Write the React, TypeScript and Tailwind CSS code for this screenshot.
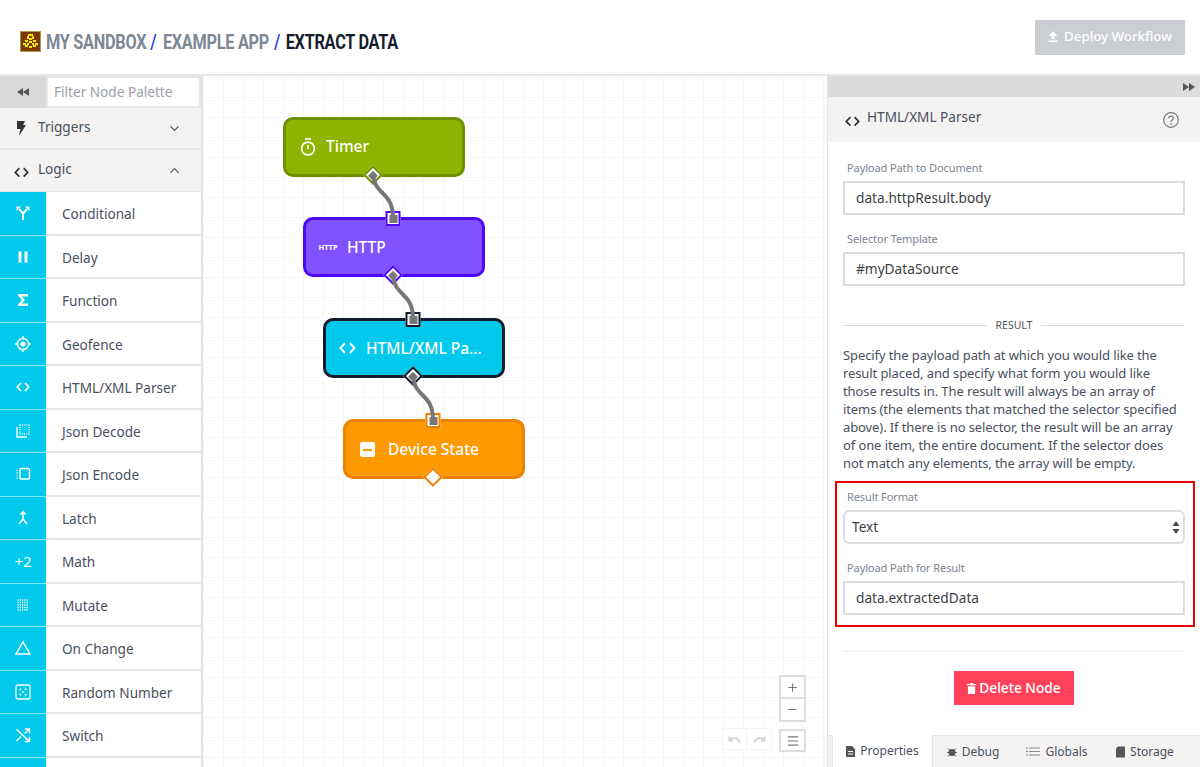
import React from "react";
import { ChevronDown, ChevronUp, Plus, Minus, Menu } from "lucide-react";

const Code = ({ c = "text-white", s = 14 }: { c?: string; s?: number }) => (
  <svg width={s} height={s * 0.72} viewBox="0 0 14 10" fill="none" stroke="currentColor" strokeWidth="1.6" className={c}>
    <path d="M5 1 1.2 5 5 9M9 1l3.8 4L9 9" />
  </svg>
);

const Ic = ({ children }: { children: React.ReactNode }) => (
  <svg width="16" height="16" viewBox="0 0 16 16" fill="none" stroke="white" strokeWidth="1.4">
    {children}
  </svg>
);

const items: [string, React.ReactNode][] = [
  ["Conditional", <Ic><path d="M8 15V8.5L4 4M8 8.5 12 4" strokeWidth="1.9" /><path d="M1.5 1.5h4.5L1.5 6zM14.5 1.5H10L14.5 6z" fill="white" stroke="none" /></Ic>],
  ["Delay", <Ic><path d="M3.5 2.5h3v11h-3zM9.5 2.5h3v11h-3z" fill="white" stroke="none" /></Ic>],
  ["Function", <Ic><path d="M3 2h10v2.4H6.8L10 8l-3.2 3.6H13V14H3v-1.6L7 8 3 3.6z" fill="white" stroke="none" /></Ic>],
  ["Geofence", <Ic><circle cx="8" cy="8" r="5.6" strokeWidth="1.5" /><circle cx="8" cy="8" r="2.6" fill="white" stroke="none" /><path d="M8 0v2.5M8 13.5V16M0 8h2.5M13.5 8H16" /></Ic>],
  ["HTML/XML Parser", <Code />],
  ["Json Decode", <Ic><path d="M2 4v10h10" strokeWidth="1.4" /><rect x="5" y="2" width="9" height="9" strokeDasharray="1 1.2" /></Ic>],
  ["Json Encode", <Ic><rect x="5" y="2.5" width="9.5" height="10.5" rx="1" strokeWidth="1.5" /><path d="M2 4v9" strokeDasharray="1 1.6" /></Ic>],
  ["Latch", <Ic><path d="M8 2v7l-4 5M8 9l4 5M5.5 4.5 8 1.5l2.5 3" strokeWidth="1.5" /></Ic>],
  ["Math", <span className="text-[15px] text-white leading-none">+2</span>],
  ["Mutate", <Ic><path d="M2.5 3h11M2.5 5.5h11M2.5 8h11M2.5 10.5h11M2.5 13h11" strokeDasharray="1.2 1.05" strokeWidth="1.3" /></Ic>],
  ["On Change", <Ic><path d="M8 2 15 14H1z" strokeWidth="1.4" /></Ic>],
  ["Random Number", <Ic><rect x="1" y="1" width="14" height="14" rx="2" strokeWidth="1.3" /><path d="M4.5 4.5h1.7v1.7H4.5zM9.8 4.5h1.7v1.7H9.8zM7.15 7.15h1.7v1.7h-1.7zM4.5 9.8h1.7v1.7H4.5zM9.8 9.8h1.7v1.7H9.8z" fill="white" stroke="none" /></Ic>],
  ["Switch", <Ic><path d="M1.5 2.5 14 14M1.5 14 6 9.5M9.5 6.5 14 2.5M10 2h4.5v4.5M10 14.5h4.5V10" strokeWidth="1.5" /></Ic>],
];

const Logo = () => (
  <svg width="21" height="21" viewBox="0 0 21 21" shapeRendering="crispEdges" className="shrink-0">
    <rect width="21" height="21" fill="#7d3a00" />
    <path d="M0 0h21v1H0zM0 20h21v1H0zM0 0h1v21H0zM20 0h1v21h-1z" fill="#a89a50" />
    <path d="M8 3h5v2H8zM7 5h2v3H7zM12 5h2v3h-2zM9 7h3v2H9zM5 9h3v2H5zM13 9h3v2h-3zM9 10h3v2H9zM3 12h3v2H3zM15 12h3v2h-3zM7 12h2v2H7zM12 12h2v2h-2zM5 14h3v2H5zM13 14h3v2h-3zM9 15h3v2H9z" fill="#f5e60a" />
  </svg>
);

const Port = ({ cls }: { cls: string }) => (
  <div className={`absolute left-[calc(50%-1px)] -translate-x-1/2 -top-[9px] w-[15px] h-[15px] border-[2px] bg-white z-10 flex items-center justify-center ${cls}`}>
    <div className="w-[8px] h-[8px] bg-[#777]" />
  </div>
);

const Diamond = ({ cls, inner = "bg-[#777]" }: { cls: string; inner?: string }) => (
  <div className={`absolute left-1/2 -ml-[8px] -bottom-[8px] w-[14px] h-[14px] rotate-45 border-[2px] bg-white z-10 flex items-center justify-center ${cls}`}>
    <div className={`w-[7px] h-[7px] ${inner}`} />
  </div>
);

const Field = ({ label, value, cls = "" }: { label: string; value: string; cls?: string }) => (
  <div className={cls}>
    <div className="text-[11px] tracking-[-0.1px] leading-[14px] text-[#7b8490] pl-1">{label}</div>
    <div className="mt-[6px] h-[34px] border-2 border-[#dcdcdc] bg-white pl-[11px] text-[13.7px] leading-[30px] text-[#3d3f45]">{value}</div>
  </div>
);

const node = "absolute w-[182px] h-[60px] rounded-[10px] border-[3px] text-white flex items-center text-[15.5px] font-medium";

export default function App() {
  return (
    <div className="w-[1200px] h-[767px] overflow-hidden bg-white flex flex-col font-['Noto_Sans',sans-serif]">
      <header className="h-[76px] shrink-0 border-b-2 border-[#e6e6e6] flex items-start justify-between pl-5 pr-[15px]">
        <div className="flex items-center mt-[31px] h-[21px] whitespace-nowrap">
          <Logo />
          <div className="ml-[5px] origin-left scale-x-[0.815] text-[20px] font-bold tracking-[-0.35px] text-[#7e8794] font-['Roboto',sans-serif]">
            <span>MY SANDBOX</span>
            <span className="text-[#1f35f5] ml-[5px] mr-[8px] font-medium">/</span>
            <span>EXAMPLE APP</span>
            <span className="text-[#1f35f5] ml-[6px] mr-[7px] font-medium">/</span>
            <span className="text-[#161d2e]">EXTRACT DATA</span>
          </div>
        </div>
        <div className="mt-[20px] w-[150px] h-[35px] bg-[#cbced2] flex items-center justify-center gap-[6px] text-white text-[13.3px] font-medium pb-[2px]">
          <svg width="10" height="11" viewBox="0 0 10 11" fill="white"><path d="M5 0 9.5 5H6.6v3H3.4V5H.5zM.5 9.5h9V11h-9z" /></svg>
          Deploy Workflow
        </div>
      </header>
      <div className="flex flex-1 min-h-0">
        <aside className="w-[203px] shrink-0 border-r-2 border-[#e3e3e3] flex flex-col overflow-hidden text-[#4a505e]">
          <div className="h-[32px] shrink-0 flex bg-[#d9d9d9]">
            <div className="w-[46px] flex items-center justify-center text-[#555]">
              <svg width="12" height="8" viewBox="0 0 12 8" fill="currentColor"><path d="M6 0v8L0 4zM12 0v8L6 4z" /></svg>
            </div>
            <div className="flex-1 border-[2px] border-[#e6e6e6] bg-white pl-[6px] text-[13.6px] leading-[28px] text-[#9aa0a6]">Filter Node Palette</div>
          </div>
          <div className="h-[42px] shrink-0 flex items-center bg-[#f4f3f2] border-b-2 border-[#e8e8e8] pl-[16px] pr-[19px] text-[13.6px]">
            <svg width="10" height="15" viewBox="0 0 10 15" fill="#333" className="mr-[12px] mt-[1px]"><path d="M1 0h8L7 4h3L3 15l1.5-7H1z" /></svg>
            <span className="flex-1 -mt-[1px]">Triggers</span>
            <ChevronDown size={15} color="#555" />
          </div>
          <div className="h-[42px] shrink-0 flex items-center bg-[#f4f3f2] border-b border-[#e8e8e8] pl-[14px] pr-[19px] text-[13.6px]">
            <Code c="text-[#333] mr-[9px] mt-[3px]" s={15} />
            <span className="flex-1 -mt-[2px]">Logic</span>
            <ChevronUp size={15} color="#555" />
          </div>
          {items.map(([name, icon]) => (
            <div key={name} className="h-[43.5px] shrink-0 flex items-stretch bg-white border-b-2 border-[#e6e6e6]">
              <div className="w-[46px] -mb-[2px] bg-[#00c9ec] border-b border-[#80e4f5] flex items-center justify-center">{icon}</div>
              <div className="pl-[16px] pt-[3px] flex items-center text-[13.6px] text-[#4a505e]">{name}</div>
            </div>
          ))}
          <div className="h-[20px] shrink-0 flex"><div className="w-[46px] bg-[#00c9ec]" /></div>
        </aside>
        <main className="flex-1 relative overflow-hidden bg-white bg-[linear-gradient(#f6f6f6_1px,transparent_1px),linear-gradient(90deg,#f6f6f6_1px,transparent_1px)] bg-[size:20px_20px] bg-[position:0_1px]">
          <div className={`${node} left-[80px] top-[41px] border-[#6f8f00] bg-[#8fb400] pl-[13px]`}>
            <svg width="18" height="18" viewBox="0 0 18 18" fill="none" stroke="white" strokeWidth="1.7"><circle cx="9" cy="10.5" r="6.4" /><path d="M6 1h6M9 7v4" /></svg>
            <span className="ml-[9px]">Timer</span>
            <Diamond cls="border-[#6f8f00]" />
          </div>
          <div className={`${node} left-[100px] top-[141px] border-[#4b09f5] bg-[#8052ff] pl-[11px] pt-[1px]`}>
            <span className="text-[7.5px] font-bold w-[22px] text-center">HTTP</span>
            <span className="ml-[8px]">HTTP</span>
            <Port cls="border-[#4b09f5]" />
            <Diamond cls="border-[#4b09f5]" />
          </div>
          <div className={`${node} left-[120px] top-[242px] border-[#141b2d] bg-[#00c9ec] pl-[13px] pt-[1px]`}>
            <Code s={17} />
            <span className="ml-[10px]">HTML/XML Pa...</span>
            <Port cls="border-[#141b2d]" />
            <Diamond cls="border-[#141b2d]" />
          </div>
          <div className={`${node} left-[140px] top-[343px] border-[#ee8200] bg-[#ff9a00] pl-[14px] pt-[1px]`}>
            <div className="w-[15px] h-[15px] rounded-[2px] bg-white flex items-center justify-center"><div className="w-[9px] h-[2px] bg-[#ff9a00]" /></div>
            <span className="ml-[13px]">Device State</span>
            <Port cls="border-[#ee8200]" />
            <Diamond cls="border-[#ee8200]" inner="bg-white" />
          </div>
          <svg className="absolute inset-0 z-20 pointer-events-none" width="624" height="691" fill="none" stroke="#777" strokeWidth="4">
            <path d="M170 99C172 120 190 115 190 142" />
            <path d="M190 200C192 221 210 216 210 243" />
            <path d="M210 301C212 322 230 317 230 344" />
          </svg>
          <div className="absolute left-[519px] top-[652px] flex text-[#d0d0d0] bg-white">
            <div className="w-[25px] h-[22px] border border-[#f5f5f5] flex items-center justify-center">
              <svg width="13" height="8" viewBox="0 0 13 8" fill="none" stroke="currentColor" strokeWidth="1.8"><path d="M12 7.5C10 3 6 2 2 4.5" /><path d="M.5 1v5.5H6" fill="currentColor" stroke="none" /></svg>
            </div>
            <div className="w-[25px] h-[22px] border border-l-0 border-[#f5f5f5] flex items-center justify-center">
              <svg width="13" height="8" viewBox="0 0 13 8" fill="none" stroke="currentColor" strokeWidth="1.8"><path d="M1 7.5C3 3 7 2 11 4.5" /><path d="M12.5 1v5.5H7" fill="currentColor" stroke="none" /></svg>
            </div>
          </div>
          <div className="absolute left-[576px] top-[599px] w-[27px] flex flex-col text-[#777]">
            <div className="h-[24px] border-2 border-[#dedede] bg-white flex items-center justify-center"><Plus size={13} /></div>
            <div className="h-[23px] border-2 border-t-0 border-[#dedede] bg-white flex items-center justify-center"><Minus size={13} /></div>
            <div className="h-[23px] mt-[7px] border-2 border-[#dedede] bg-white flex items-center justify-center"><Menu size={14} /></div>
          </div>
        </main>
        <section className="w-[374px] -ml-[1px] shrink-0 border-l-2 border-[#e3e3e3] flex flex-col">
          <div className="h-[21px] shrink-0 bg-[#dcdcdc] flex items-center justify-end pr-[5px] text-[#555]">
            <svg width="12" height="8" viewBox="0 0 12 8" fill="currentColor"><path d="M0 0v8l6-4zM6 0v8l6-4z" /></svg>
          </div>
          <div className="h-[45px] shrink-0 bg-[#f4f3f2] flex items-center pl-[17px] pr-[21px] text-[13.6px] text-[#4a505e]">
            <Code c="text-[#333] mr-[7px] mt-[3px]" s={15} />
            <span className="flex-1 -mt-[4px]">HTML/XML Parser</span>
            <svg width="16" height="16" viewBox="0 0 16 16" fill="none" stroke="#777" strokeWidth="1.2"><circle cx="8" cy="8" r="7.3" /><path d="M5.7 6.2C5.8 3.4 10.3 3.4 10.3 6.2 10.3 8 8 8 8 10" /><path d="M8 11.2v1.6" strokeWidth="1.4" /></svg>
          </div>
          <div className="flex-1 min-h-0 flex flex-col pl-[15px] pr-[15px] pt-[19px]">
            <Field label="Payload Path to Document" value="data.httpResult.body" />
            <Field label="Selector Template" value="#myDataSource" cls="mt-[17px]" />
            <div className="mt-[32px] flex items-center text-[10.5px] leading-[14px] text-[#555]">
              <div className="w-[144px] h-[1px] bg-[#ddd]" />
              <span className="flex-1 text-center">RESULT</span>
              <div className="w-[144px] h-[1px] bg-[#ddd]" />
            </div>
            <p className="mt-[14px] text-[13px] tracking-[-0.1px] leading-[18px] text-[#4a505e]">
              Specify the payload path at which you would like the result placed, and specify what form you would like those results in. The result will always be an array of items (the elements that matched the selector specified above). If there is no selector, the result will be an array of one item, the entire document. If the selector does not match any elements, the array will be empty.
            </p>
            <div className="-ml-[8px] -mr-[10px] mt-[9px] h-[146px] border-2 border-[#f00000] pl-[6px] pr-[8px] pt-[7px] shrink-0">
              <div className="text-[11px] tracking-[-0.1px] leading-[14px] text-[#7b8490] pl-1">Result Format</div>
              <div className="mt-[6px] h-[34px] border-2 border-[#dcdcdc] rounded-[6px] bg-white pl-[7px] pr-[3px] flex items-center justify-between text-[13.7px] text-[#3d3f45]">
                Text
                <svg width="8" height="13" viewBox="0 0 8 13" fill="#444"><path d="M4 0l3.5 5h-7zM4 13 .5 8h7z" /></svg>
              </div>
              <Field label="Payload Path for Result" value="data.extractedData" cls="mt-[17px]" />
            </div>
            <div className="mt-[24px] h-[1px] bg-[#eee] shrink-0" />
            <div className="mt-[19px] self-center w-[120px] h-[34px] shrink-0 bg-[#ff4259] text-white flex items-center justify-center gap-[3px] text-[13.7px] font-medium">
              <svg width="9" height="11" viewBox="0 0 10 12" fill="white"><path d="M3.5 0h3v1H10v1.5H0V1h3.5zM1 3.5h8V12H1z" /></svg>
              Delete Node
            </div>
          </div>
          <div className="h-[32px] shrink-0 bg-[#f4f3f2] border-t border-[#e3e3e3] flex pl-[4px] text-[12px] text-[#4a505e]">
            <div className="w-[101px] bg-white border-r border-l border-[#e3e3e3] flex items-center justify-center gap-[5px] -mt-[1px]">
              <svg width="9" height="11" viewBox="0 0 9 11" fill="#555"><path d="M0 0h6l3 3v8H0zM2 5v1h5V5zm0 2.5v1h5v-1z" fillRule="evenodd" /></svg>
              Properties
            </div>
            <div className="w-[80px] flex items-center justify-center gap-[5px]">
              <svg width="10" height="10" viewBox="0 0 10 10" fill="#555"><circle cx="5" cy="5.5" r="3.5" /><path d="M0 5.5h10M1 1.5l8 8M9 1.5l-8 8" stroke="#555" strokeWidth="0.9" /></svg>
              Debug
            </div>
            <div className="w-[88px] flex items-center justify-center gap-[5px]">
              <svg width="14" height="9" viewBox="0 0 14 9" fill="none" stroke="#888"><path d="M0 1h2M3 1h11M0 4.5h2M3 4.5h11M0 8h2M3 8h11" /></svg>
              Globals
            </div>
            <div className="w-[88px] flex items-center justify-center gap-[5px]">
              <svg width="9" height="12" viewBox="0 0 10 12" fill="#555"><path d="M2 0h8v12H0V2z" /></svg>
              Storage
            </div>
          </div>
        </section>
      </div>
    </div>
  );
}
